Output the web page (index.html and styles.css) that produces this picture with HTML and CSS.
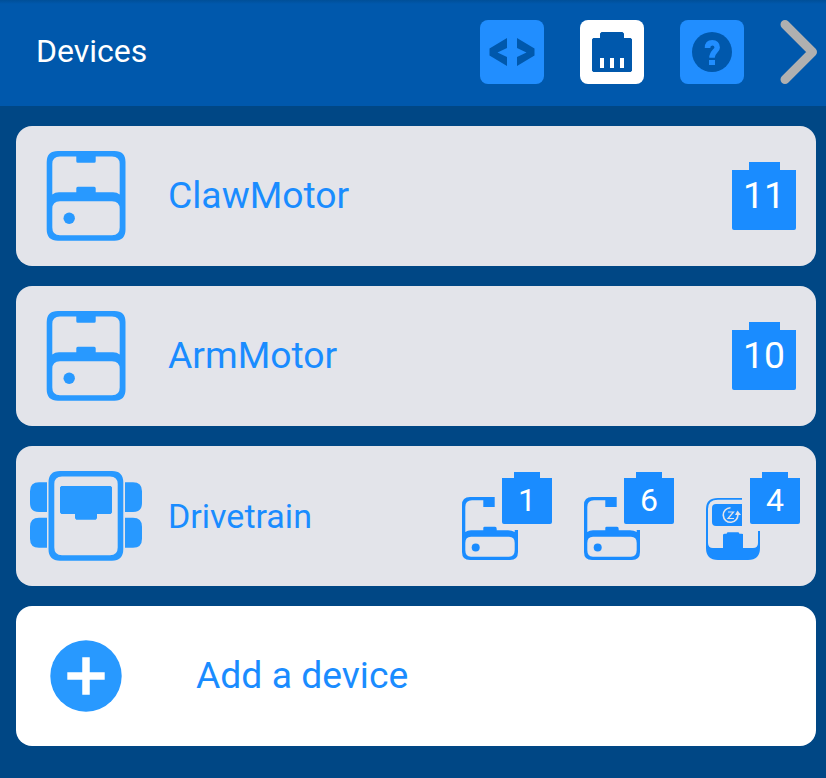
FILE: index.html
```html
<!DOCTYPE html>
<html lang="en">
<head>
<meta charset="utf-8">
<title>Devices</title>
<link rel="stylesheet" href="styles.css">
</head>
<body>
<svg class="defs" width="0" height="0" aria-hidden="true">
  <symbol id="motor" viewBox="0 0 80 90">
    <path fill-rule="evenodd" d="M12 0H68.500Q79.500 0 79.500 11V78.500Q79.500 89.700 68.500 89.700H12Q.7 89.700 .7 78.500V11Q.7 0 12 0ZM14 5.500Q6.300 5.500 6.300 13V43.500Q9 41.300 13 41.300H30.300V37.200Q30.300 35.700 31.800 35.700H48.200Q49.700 35.700 49.700 37.200V41.300H67Q71 41.300 73.700 43.500V13Q73.700 5.500 66 5.500H49.700V10.300Q49.700 11.800 48.200 11.800H31.800Q30.300 11.800 30.300 10.300V5.500ZM14 50.300Q6.300 50.300 6.300 58V76.500Q6.300 84.300 14 84.300H66Q73.700 84.300 73.700 76.500V58Q73.700 50.300 66 50.300Z"/>
    <circle cx="23.200" cy="67.300" r="5.700"/>
  </symbol>
  <symbol id="small-motor" viewBox="0 0 56 88">
    <path fill-rule="evenodd" d="M8 25H32.700V35H21.300V28.300H10Q3.300 28.300 3.300 35V60Q5.500 58.300 9 58.300H21.300V56Q21.300 54.700 22.700 54.700H33Q34.700 54.700 34.700 57V58.300H46Q50 58.300 52.700 60V58H56V80Q56 88 48 88H8Q0 88 0 80V33Q0 25 8 25ZM9 64.700Q3.300 64.700 3.300 71V78Q3.300 84.700 9 84.700H47Q52.700 84.700 52.700 78V71Q52.700 64.700 47 64.700Z"/>
    <circle cx="13.700" cy="75.500" r="4"/>
  </symbol>
</svg>

<header class="header">
  <h1 class="title">Devices</h1>
  <nav class="tools">
    <button class="tool" aria-label="Code">
      <svg viewBox="0 0 64 64"><path d="M27 18V28L17.500 32.500 27 37V46L9.500 35.500V28.500ZM37 18V28L46.500 32.500 37 37V46L54.500 35.500V28.500Z"/></svg>
    </button>
    <button class="tool tool-active" aria-label="Devices">
      <svg viewBox="0 0 64 64"><path fill-rule="evenodd" d="M21.500 12H42.500L44 13.500V18H50.700L52 19.300V50.700L50.700 52H13.300L12 50.700V19.300L13.300 18H20V13.500ZM20 38V48H24V38ZM30 38V48H34V38ZM40 38V48H44V38Z"/></svg>
    </button>
    <button class="tool" aria-label="Help">
      <svg viewBox="0 0 64 64"><circle cx="32" cy="32" r="20"/><path class="question" d="M27.500 28C27.500 24.200 29.200 22.700 32.300 22.700S37.200 24.500 37.200 27.400C37.200 31.200 32 31.500 32 37.800"/><path class="question-dot" d="M29 40H35V45H29Z"/></svg>
    </button>
  </nav>
  <svg class="chevron" width="40" height="68" viewBox="0 0 40 68"><path d="M7 6.500 34.500 34 7 61.500"/></svg>
</header>

<main class="devices">
  <section class="card">
    <div class="icon"><svg width="80" height="90"><use href="#motor"/></svg></div>
    <span class="name">ClawMotor</span>
    <div class="port"><span>11</span></div>
  </section>
  <section class="card">
    <div class="icon"><svg width="80" height="90"><use href="#motor"/></svg></div>
    <span class="name">ArmMotor</span>
    <div class="port"><span>10</span></div>
  </section>
  <section class="card">
    <div class="icon">
      <svg width="112" height="90" viewBox="0 0 112 90">
        <path fill-rule="evenodd" d="M30 0H82Q93.300 0 93.300 11.500V78Q93.300 89.700 82 89.700H30Q18.500 89.700 18.500 78V11.500Q18.500 0 30 0ZM32 5.500Q24.300 5.500 24.300 13V76.500Q24.300 84.300 32 84.300H80Q87.700 84.300 87.700 76.500V13Q87.700 5.500 80 5.500Z"/>
        <path d="M31.300 15H80.700L82 16.300V41.500L80.700 43H67V47.300L65.700 48.700H46.300L45 47.300V43H31.300L30 41.500V16.300Z"/>
        <path d="M17 11.300V41H9Q0 41 0 32V20.300Q0 11.300 9 11.300ZM17 46.700V76.700H9Q0 76.700 0 67.700V55.700Q0 46.700 9 46.700ZM95 11.300V41H103Q112 41 112 32V20.300Q112 11.300 103 11.300ZM95 46.700V76.700H103Q112 76.700 112 67.700V55.700Q112 46.700 103 46.700Z"/>
      </svg>
    </div>
    <span class="name drive">Drivetrain</span>
    <div class="parts">
      <div class="part"><svg width="56" height="88"><use href="#small-motor"/></svg><div class="port port-small"><span>1</span></div></div>
      <div class="part"><svg width="56" height="88"><use href="#small-motor"/></svg><div class="port port-small"><span>6</span></div></div>
      <div class="part part-sensor">
        <svg width="56" height="88" viewBox="0 0 56 88">
          <path d="M36 26H12Q0 26 0 37V76Q0 88 12 88H42Q54 88 54 76V59H52V71Q52 76 47 76H37V62L35.500 61.700H33.500L32.500 60.300H21.500L20.500 61.700H18.500L17 62.500V76H7Q2 76 2 71V37Q2 27.700 12 27.700H36Z"/>
          <path d="M10 32H36V54H10Q6 54 6 50V36Q6 32 10 32Z"/>
          <path class="turn" d="M24.500 35.700A7.300 7.300 0 1 0 31.800 42"/>
          <path class="turn-head" d="M29 43 31.500 38.500 35 43Z"/>
          <path class="z" d="M22 40H27.500L22 46.500H28"/>
        </svg>
        <div class="port port-small"><span>4</span></div>
      </div>
    </div>
  </section>
  <section class="card card-add">
    <div class="icon"><svg width="72" height="72" viewBox="0 0 72 72"><circle cx="36" cy="36" r="35.700"/><path class="plus" d="M36 17.300V54.700M17.300 36H54.700"/></svg></div>
    <span class="name">Add a device</span>
  </section>
</main>
</body>
</html>
```
FILE: styles.css
```css
* { box-sizing: border-box; }
body {
  margin: 0;
  min-height: 778px;
  background: #004785;
  font-family: Roboto, "Liberation Sans", sans-serif;
  overflow: hidden;
}
.defs { position: absolute; }
svg { display: block; flex: none; }
.header {
  height: 106px;
  padding-left: 36px;
  display: flex;
  align-items: flex-start;
  background: linear-gradient(#004f98, #0058ac 4px);
}
.title {
  margin: 0;
  padding-top: 32px;
  font-size: 32px;
  line-height: 38px;
  font-weight: 400;
  color: #fff;
}
.tools { display: flex; gap: 36px; margin: 20px 0 0 auto; }
.tool {
  width: 64px;
  height: 64px;
  padding: 0;
  border: 0;
  border-radius: 8px;
  background: #218eff;
  fill: #0058ac;
}
.tool-active { background: #fff; }
.question { fill: none; stroke: #218eff; stroke-width: 5.500; }
.question-dot { fill: #218eff; }
.chevron { margin: 18px 8px 0 34px; }
.chevron path {
  fill: none;
  stroke: #b0b0b0;
  stroke-width: 9;
  stroke-linecap: round;
  stroke-linejoin: round;
}
.devices { display: grid; gap: 20px; padding: 20px 10px 0 16px; }
.card {
  height: 140px;
  padding: 0 20px 0 14px;
  display: flex;
  align-items: center;
  border-radius: 16px;
  background: #e3e4ea;
}
.card-add { background: #fff; }
.icon {
  width: 112px;
  display: flex;
  justify-content: center;
  flex: none;
  fill: #2899ff;
}
.name {
  margin-left: 26px;
  padding-bottom: 2px;
  font-size: 37.300px;
  line-height: 44px;
  color: #1a8cff;
  white-space: nowrap;
}
.drive { font-size: 34px; padding-bottom: 0; }
.card-add .name { margin-left: 54px; }
.plus { stroke: #fff; stroke-width: 7.500; }
.port {
  width: 64px;
  height: 68px;
  margin-left: auto;
  display: flex;
  flex-direction: column;
  align-items: center;
  color: #fff;
  font-size: 37.300px;
  background:
    linear-gradient(#1a8cff, #1a8cff) 50% 0 / 31px 9px no-repeat,
    linear-gradient(#1a8cff, #1a8cff) 0 8px / 100% 60px no-repeat;
  border-radius: 2px;
}
.port span { line-height: 44px; margin-top: 11px; }
.parts { display: flex; gap: 32px; margin: 0 -4px 0 auto; }
.part { display: flex; width: 90px; height: 88px; fill: #1a8cff; }
.part-sensor { width: 94px; }
.port-small {
  width: 50px;
  height: 52px;
  flex: none;
  margin-left: -16px;
  font-size: 32px;
  background:
    linear-gradient(#1a8cff, #1a8cff) 50% 0 / 26px 7px no-repeat,
    linear-gradient(#1a8cff, #1a8cff) 0 6px / 100% 46px no-repeat;
}
.port-small span { line-height: 38px; margin-top: 9px; }
.part-sensor .port-small { margin-left: -12px; }
.turn, .z { fill: none; stroke: #e3e4ea; stroke-width: 1.600; }
.z { stroke-width: 1.200; }
.turn-head { fill: #e3e4ea; }
```
